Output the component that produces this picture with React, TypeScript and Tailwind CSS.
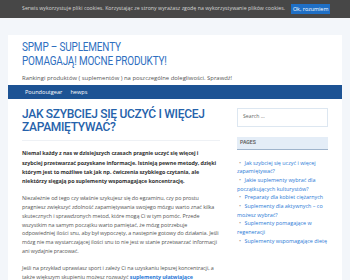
import React from "react";

export default function App() {
  const pages = [
    "Jak szybciej się uczyć i więcej zapamiętywać?",
    "Jakie suplementy wybrać dla początkujących kulturystów?",
    "Preparaty dla kobiet ciężarnych",
    "Suplementy dla aktywnych – co możesz wybrać?",
    "Suplementy pomagające w regeneracji",
    "Suplementy wspomagające dietę",
  ];
  return (
    <div className="w-[350px] h-[280px] overflow-hidden bg-[#f3f6fa] font-['Open_Sans',sans-serif]">
      <div className="h-[18px] bg-[#474747] flex items-center pl-[22px] gap-[6px]">
        <span className="text-[5.2px] tracking-[0.04px] text-[#d8d8d8] whitespace-nowrap">
          Serwis wykorzystuje pliki cookies. Korzystając ze strony wyrażasz zgodę na wykorzystywanie plików cookies.
        </span>
        <span className="w-[39px] shrink-0 justify-center bg-[#1f6fc5] text-white text-[5.4px] h-[10px] flex items-center whitespace-nowrap">
          Ok, rozumiem
        </span>
      </div>
      <div className="mx-[8px] mt-[17px] bg-white">
        <div className="px-[14px] pt-[6px] pb-[3px]">
          <div className="font-['Roboto',sans-serif] text-[#2f6fbf] text-[12px] leading-[13.5px] tracking-[-0.2px] uppercase origin-left [transform:scaleX(0.83)] w-[260px]">
            SPMP – Suplementy
            <br />
            pomagają! Mocne produkty!
          </div>
          <div className="mt-[6px] text-[5.9px] text-[#555] leading-[8px]">
            Rankingi produktów ( suplementów ) na poszczególne dolegliwości. Sprawdź!
          </div>
        </div>
        <div className="h-[14px] bg-[#1d5394] flex items-center pl-[17px] gap-[8px] text-[5.6px] text-white">
          <span>Poundoutgear</span>
          <span>hewps</span>
        </div>
        <div className="flex px-[14px] pt-[8.5px] gap-[17px]">
          <div className="w-[198px] tracking-[-0.07px]">
            <h1 className="font-['Roboto',sans-serif] font-medium text-[#2562ab] text-[12px] leading-[13px] tracking-[-0.3px] uppercase">
              Jak szybciej się uczyć i więcej zapamiętywać?
            </h1>
            <div className="mt-[6.5px] h-px bg-[#eef1f5]" />
            <p className="mt-[8.4px] text-[5.4px] leading-[9.2px] font-bold text-[#333]">
              Niemal każdy z nas w dzisiejszych czasach pragnie uczyć się więcej i szybciej przetwarzać pozyskane informacje. Istnieją pewne metody, dzięki którym jest to możliwe tak jak np. ćwiczenia szybkiego czytania, ale niektórzy sięgają po suplementy wspomagające koncentrację.
            </p>
            <p className="mt-[8px] text-[5.4px] leading-[8.8px] text-[#555]">
              Niezależnie od tego czy właśnie szykujesz się do egzaminu, czy po prostu pragniesz zwiększyć zdolność zapamiętywania swojego mózgu warto znać kilka skutecznych i sprawdzonych metod, które mogą Ci w tym pomóc. Przede wszystkim na samym początku warto pamiętać, że mózg potrzebuje odpowiedniej ilości snu, aby był wypoczęty, a następnie gotowy do działania. Jeśli mózg nie ma wystarczającej ilości snu to nie jest w stanie przetwarzać informacji ani wydajnie pracować.
            </p>
            <p className="mt-[8px] text-[5.4px] leading-[8.8px] text-[#555]">
              Jeśli na przykład uprawiasz sport i zależy Ci na uzyskaniu lepszej koncentracji, a także większym skupieniu możesz rozważyć{" "}
              <span className="font-bold text-[#2b79d6]">suplementy ułatwiające koncentrację</span> i poprawiające pamięć.
            </p>
          </div>
          <div className="w-[91px]">
            <div className="h-[19px] border border-[#dde7f1] flex items-center pl-[5px] text-[5.2px] text-[#666]">
              Search …
            </div>
            <div className="mt-[10px] h-[13px] bg-[#e4edf7] border-b-[1.5px] border-[#9fb4cc] flex items-center pl-[3px] font-['Roboto',sans-serif] font-medium text-[5.2px] text-[#555]">
              PAGES
            </div>
            <ul className="mt-[9px] text-[5.4px] leading-[8.7px] text-[#2b79d6]">
              {pages.map((p) => (
                <li key={p}>
                  <span className="text-[#999] px-[2px]">•</span> {p}
                </li>
              ))}
            </ul>
          </div>
        </div>
        <div className="h-[40px]" />
      </div>
    </div>
  );
}
